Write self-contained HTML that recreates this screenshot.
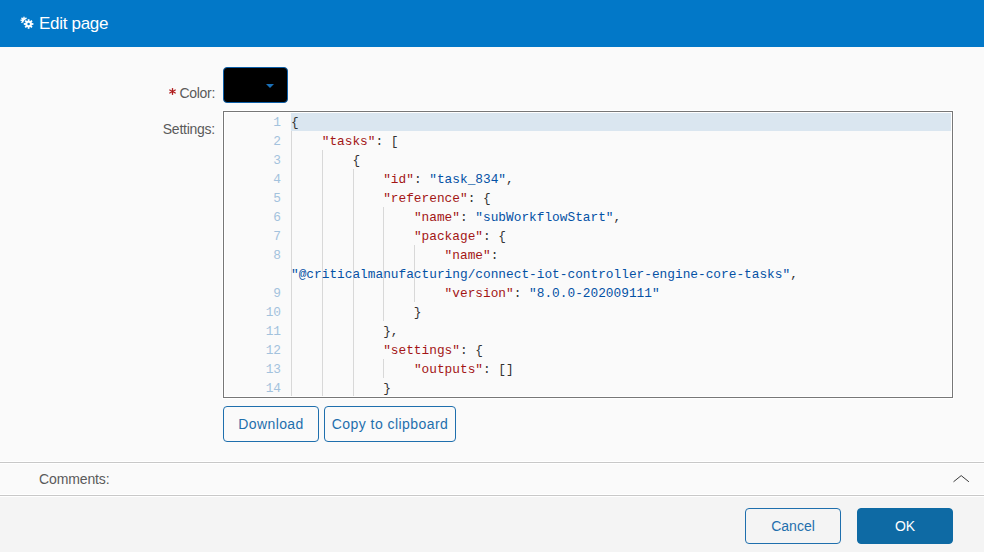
<!DOCTYPE html>
<html><head><meta charset="utf-8">
<style>
*{box-sizing:border-box;margin:0;padding:0}
html,body{width:984px;height:552px;overflow:hidden;background:#fafafa;font-family:"Liberation Sans",sans-serif}
.hdr{position:absolute;left:0;top:0;width:984px;height:47px;background:#0278c8;color:#fff}
.hdr .t{position:absolute;left:39px;top:14px;font-size:17px;line-height:20px;letter-spacing:-0.3px}

.lbl{position:absolute;color:#5a5a5a;font-size:14px;line-height:16px;text-align:right;right:769px}
.req{color:#b21f1f}
.sw{position:absolute;left:223px;top:67px;width:65px;height:36px;background:#000;border:1px solid #0b5ea8;border-radius:4px}
.sw i{position:absolute;left:42px;top:16px;width:0;height:0;border-left:4px solid transparent;border-right:4px solid transparent;border-top:4px solid #1a70b8}
.ed{position:absolute;left:223px;top:111px;width:730px;height:287px;border:1px solid #777;background:#fafafa;box-shadow:0 0 0 1px #fff;overflow:hidden}
.gut{position:absolute;left:0;top:0;width:67px;height:100%}
.ln{position:absolute;margin-top:1px;right:10px;width:57px;text-align:right;color:#a3c2dd;font-family:"Liberation Mono",monospace;font-size:12.8px;line-height:19px}
.code{position:absolute;left:67px;top:0;right:0;bottom:0}
.act{position:absolute;left:0;right:0;top:0;height:19px;background:#dae6f0}
.row{position:absolute;left:0;margin-top:1px;white-space:pre;font-family:"Liberation Mono",monospace;font-size:12.8px;line-height:19px;color:#333}
.k{color:#a31515}.s{color:#0451a5}
.g{position:absolute;width:1px;background:#d8d8d8}
.btn{position:absolute;height:36px;border:1px solid #1f6fad;border-radius:4px;color:#1f6fad;font-size:14px;line-height:34px;text-align:center;background:transparent}
.sep{position:absolute;left:0;width:984px;height:1px;background:#c8c8c8;box-shadow:0 -1px 0 #fff,0 1px 0 #fff;z-index:2}
.foot{position:absolute;left:0;top:496px;width:984px;height:56px;background:#f4f4f4}
</style></head><body>
<div class="hdr">
<svg style="position:absolute;left:18px;top:13px" width="20" height="20" viewBox="0 0 20 20"><circle cx="6.0" cy="7.2" r="2.3" fill="#fff"/><rect x="5.3" y="3.7" width="1.4" height="2.0" fill="#fff" transform="rotate(0.0 6.0 7.2)"/><rect x="5.3" y="3.7" width="1.4" height="2.0" fill="#fff" transform="rotate(45.0 6.0 7.2)"/><rect x="5.3" y="3.7" width="1.4" height="2.0" fill="#fff" transform="rotate(90.0 6.0 7.2)"/><rect x="5.3" y="3.7" width="1.4" height="2.0" fill="#fff" transform="rotate(135.0 6.0 7.2)"/><rect x="5.3" y="3.7" width="1.4" height="2.0" fill="#fff" transform="rotate(180.0 6.0 7.2)"/><rect x="5.3" y="3.7" width="1.4" height="2.0" fill="#fff" transform="rotate(225.0 6.0 7.2)"/><rect x="5.3" y="3.7" width="1.4" height="2.0" fill="#fff" transform="rotate(270.0 6.0 7.2)"/><rect x="5.3" y="3.7" width="1.4" height="2.0" fill="#fff" transform="rotate(315.0 6.0 7.2)"/><circle cx="10.6" cy="11" r="5.6" fill="#0278c8"/><circle cx="10.6" cy="11" r="3.3" fill="#fff"/><rect x="9.7" y="6.2" width="1.8" height="2.3" fill="#fff" transform="rotate(0.0 10.6 11)"/><rect x="9.7" y="6.2" width="1.8" height="2.3" fill="#fff" transform="rotate(45.0 10.6 11)"/><rect x="9.7" y="6.2" width="1.8" height="2.3" fill="#fff" transform="rotate(90.0 10.6 11)"/><rect x="9.7" y="6.2" width="1.8" height="2.3" fill="#fff" transform="rotate(135.0 10.6 11)"/><rect x="9.7" y="6.2" width="1.8" height="2.3" fill="#fff" transform="rotate(180.0 10.6 11)"/><rect x="9.7" y="6.2" width="1.8" height="2.3" fill="#fff" transform="rotate(225.0 10.6 11)"/><rect x="9.7" y="6.2" width="1.8" height="2.3" fill="#fff" transform="rotate(270.0 10.6 11)"/><rect x="9.7" y="6.2" width="1.8" height="2.3" fill="#fff" transform="rotate(315.0 10.6 11)"/><circle cx="10.6" cy="11" r="1.3" fill="#0278c8"/></svg>
<div class="t">Edit page</div>
</div>
<svg style="position:absolute;left:168px;top:87px" width="9" height="9" viewBox="0 0 9 9"><g stroke="#b01c1c" stroke-width="1.3"><path d="M4.5 1.1V7.9"/><path d="M1.3 2.8L7.7 6.2"/><path d="M1.3 6.2L7.7 2.8"/></g></svg>
<div class="lbl" style="top:85px;letter-spacing:-0.3px">Color:</div>
<div class="sw"><i></i></div>
<div class="lbl" style="top:121px;letter-spacing:-0.25px">Settings:</div>
<div class="ed">
 <div class="gut">
  <div class="ln" style="top:0">1</div>
  <div class="ln" style="top:19px">2</div>
  <div class="ln" style="top:38px">3</div>
  <div class="ln" style="top:57px">4</div>
  <div class="ln" style="top:76px">5</div>
  <div class="ln" style="top:95px">6</div>
  <div class="ln" style="top:114px">7</div>
  <div class="ln" style="top:133px">8</div>
  <div class="ln" style="top:171px">9</div>
  <div class="ln" style="top:190px">10</div>
  <div class="ln" style="top:209px">11</div>
  <div class="ln" style="top:228px">12</div>
  <div class="ln" style="top:247px">13</div>
  <div class="ln" style="top:266px">14</div>
 </div>
 <div class="code">
  <div class="act"></div>
  <div class="g" style="left:0;top:19px;height:268px"></div>
  <div class="g" style="left:31px;top:38px;height:249px"></div>
  <div class="g" style="left:62px;top:57px;height:230px"></div>
  <div class="g" style="left:92px;top:95px;height:114px"></div>
  <div class="g" style="left:92px;top:247px;height:19px"></div>
  <div class="g" style="left:123px;top:133px;height:57px"></div>
  <div class="row" style="top:0">{</div>
  <div class="row" style="top:19px">    <span class="k">"tasks"</span>: [</div>
  <div class="row" style="top:38px">        {</div>
  <div class="row" style="top:57px">            <span class="k">"id"</span>: <span class="s">"task_834"</span>,</div>
  <div class="row" style="top:76px">            <span class="k">"reference"</span>: {</div>
  <div class="row" style="top:95px">                <span class="k">"name"</span>: <span class="s">"subWorkflowStart"</span>,</div>
  <div class="row" style="top:114px">                <span class="k">"package"</span>: {</div>
  <div class="row" style="top:133px">                    <span class="k">"name"</span>:</div>
  <div class="row" style="top:152px"><span class="s">"@criticalmanufacturing/connect-iot-controller-engine-core-tasks"</span>,</div>
  <div class="row" style="top:171px">                    <span class="k">"version"</span>: <span class="s">"8.0.0-202009111"</span></div>
  <div class="row" style="top:190px">                }</div>
  <div class="row" style="top:209px">            },</div>
  <div class="row" style="top:228px">            <span class="k">"settings"</span>: {</div>
  <div class="row" style="top:247px">                <span class="k">"outputs"</span>: []</div>
  <div class="row" style="top:266px">            }</div>
 </div>
 <div style="position:absolute;left:0;top:0;right:0;bottom:0;border:1px solid #fff"></div>
</div>
<div class="btn" style="left:223px;top:406px;width:96px;letter-spacing:0.4px">Download</div>
<div class="btn" style="left:324px;top:406px;width:132px;letter-spacing:0.44px">Copy to clipboard</div>
<div class="sep" style="top:462px"></div>
<div class="lbl" style="left:39px;right:auto;top:471px;text-align:left;letter-spacing:-0.12px">Comments:</div>
<svg style="position:absolute;left:952px;top:474px" width="18" height="10" viewBox="0 0 18 10"><path d="M1.5 7.8 L9.2 1.6 L16.9 7.8" fill="none" stroke="#3a3a3a" stroke-width="1"/></svg>
<div class="sep" style="top:495px"></div>
<div class="foot"></div>
<div class="btn" style="left:745px;top:508px;width:96px">Cancel</div>
<div class="btn" style="left:857px;top:508px;width:96px;background:#0e6aa4;border-color:#0e6aa4;color:#fff">OK</div>
</body></html>
